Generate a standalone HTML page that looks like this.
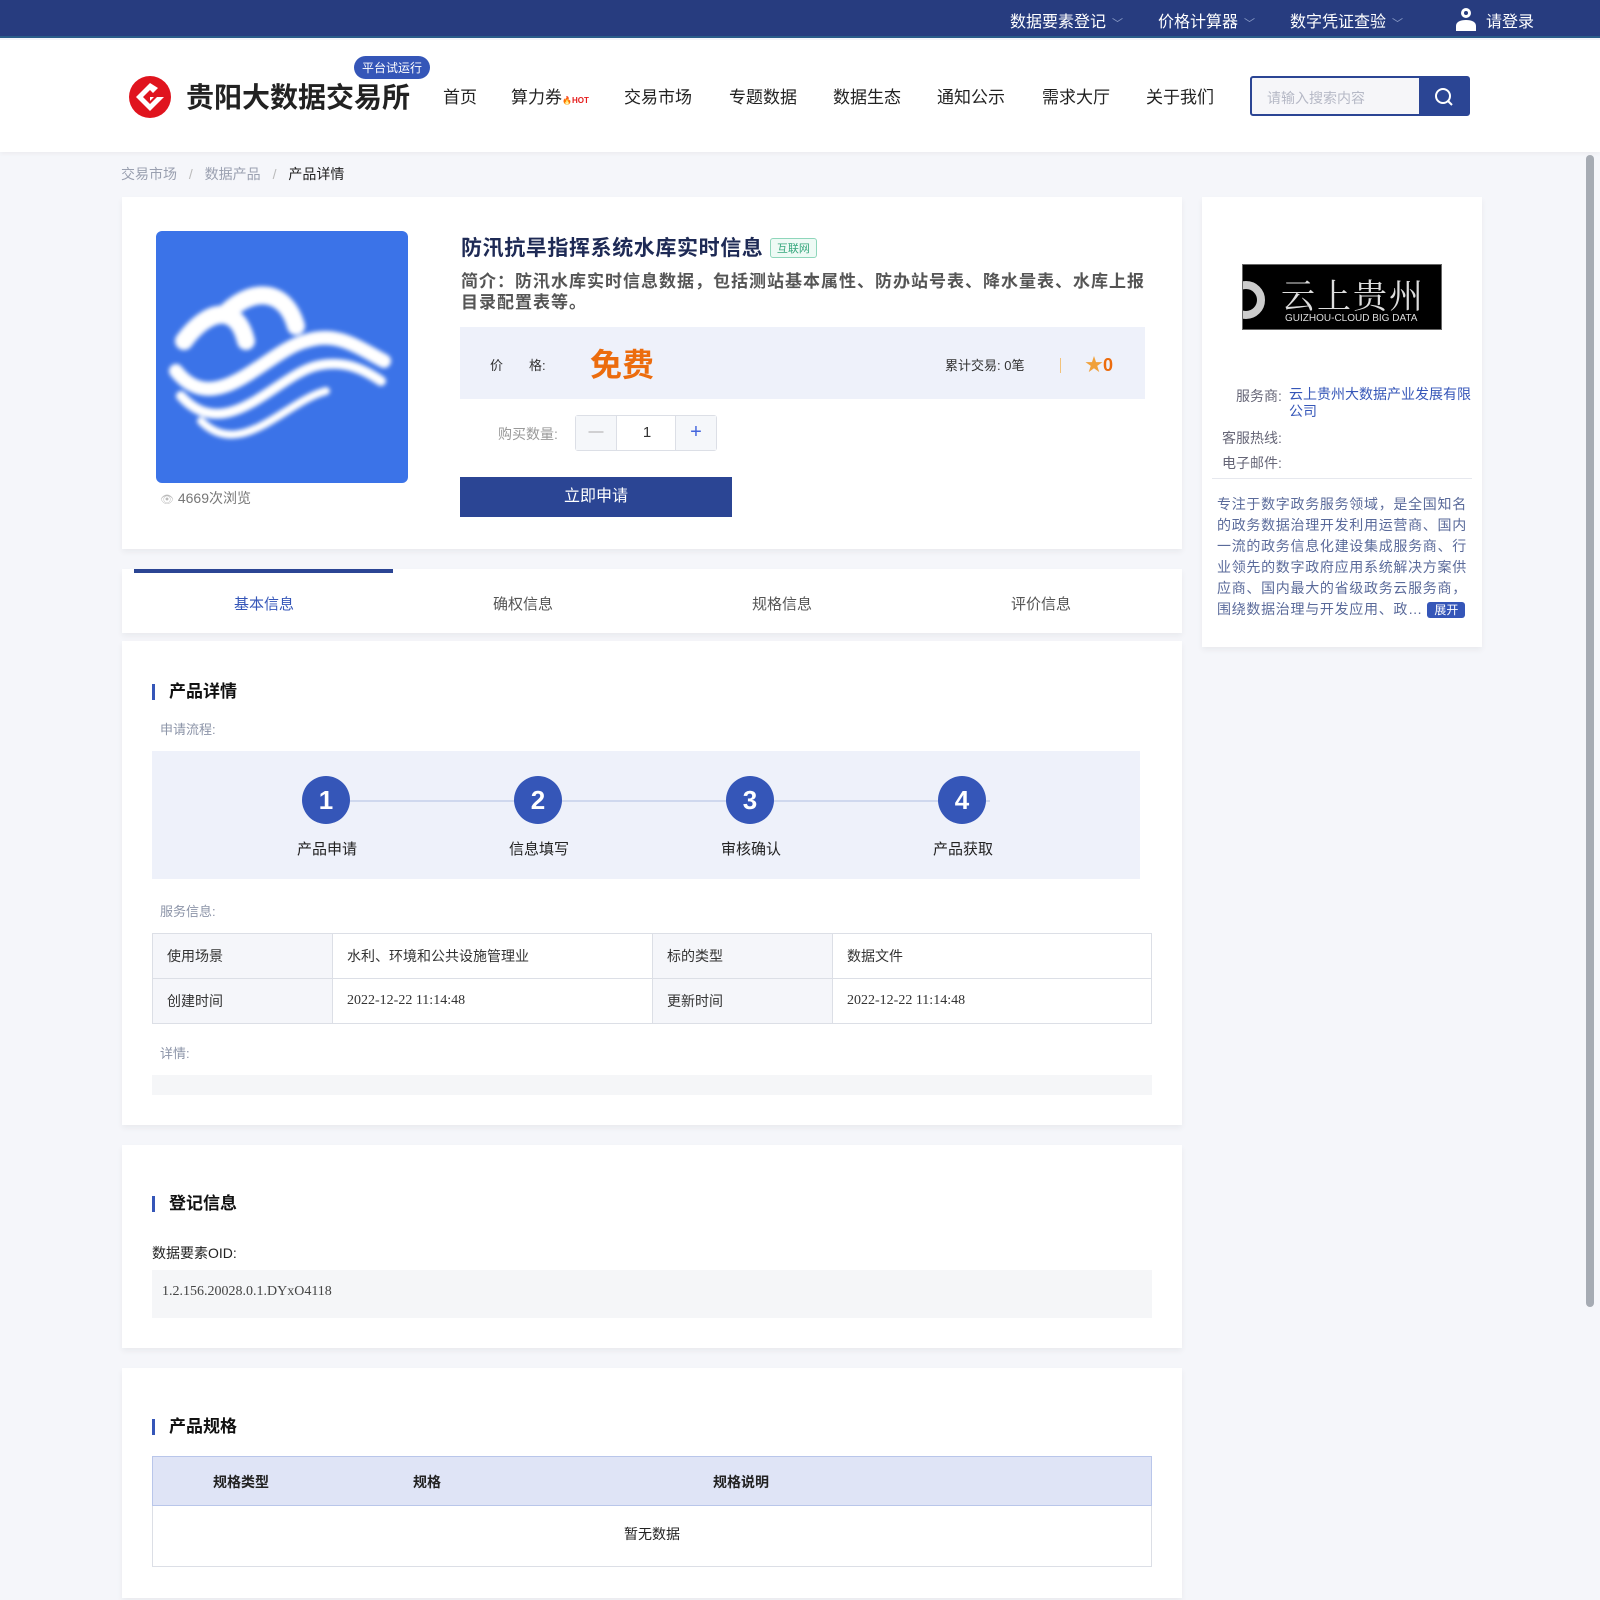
<!DOCTYPE html>
<html><head><meta charset="utf-8">
<style>
*{margin:0;padding:0;box-sizing:border-box}
body{width:1600px;height:1600px;background:#f5f6fa;font-family:"Liberation Sans","Noto Sans CJK SC",sans-serif;position:relative;overflow:hidden;color:#333}
.a{position:absolute}
.top{left:0;top:0;width:1600px;height:38px;background:#273c7f;border-bottom:2px solid #2a5d8a}
.top span{position:absolute;top:8px;color:#fff;font-size:16px}
.top i{font-style:normal;color:#8a9bc6;font-size:11px;margin-left:6px}
.hdr{left:0;top:40px;width:1600px;height:112px;background:#fff;box-shadow:0 2px 4px rgba(0,0,0,.04)}
.nav{position:absolute;top:83px;font-size:17px;color:#222}
.card{background:#fff;box-shadow:0 3px 6px rgba(0,0,0,.05)}
.sec{font-size:17px;font-weight:bold;color:#111;padding-left:14px;border-left:3px solid #3556b8;line-height:16px}
.lbl{font-size:13px;color:#8c94a8}
table{border-collapse:collapse}
td{border:1px solid #dcdfe6;font-size:14px;height:45px;padding-left:14px;color:#333}
.step{position:absolute;top:776px;width:48px;height:48px;border-radius:50%;background:#3556b8;color:#fff;font-size:26px;font-weight:bold;text-align:center;line-height:48px}
.stl{position:absolute;top:838px;font-size:15px;color:#222;width:80px;text-align:center}
</style></head><body>
<div class="a top">
<span style="left:1010px">数据要素登记<i>﹀</i></span>
<span style="left:1158px">价格计算器<i>﹀</i></span>
<span style="left:1290px">数字凭证查验<i>﹀</i></span>
<svg class="a" style="left:1454px;top:6px" width="24" height="26" viewBox="0 0 24 26"><circle cx="12" cy="7" r="5" fill="#fff"/><path d="M2 25v-5c0-4 4-6 10-6s10 2 10 6v5z" fill="#fff"/><circle cx="12" cy="7" r="2" fill="#273c7f"/></svg>
<span style="left:1486px">请登录</span>
</div>
<div class="a hdr">
<svg class="a" style="left:129px;top:36px" width="42" height="42" viewBox="0 0 42 42"><circle cx="21" cy="21" r="21" fill="#e0141e"/><path d="M21 7 L7 21 L21 35 L35 21 L28 21 L21 28 L14 21 L21 14 L24 17 L29 12 Z" fill="#fff"/><path d="M21 21 L25 21 L21 25 Z" fill="#fff"/></svg>
<div class="a" style="left:186px;top:36px;font-size:28px;font-weight:bold;color:#222">贵阳大数据交易所</div>
<div class="a" style="left:354px;top:16px;background:#3556b8;color:#fff;font-size:12px;padding:3px 8px;border-radius:12px">平台试运行</div>
</div>
<div class="nav" style="left:443px">首页</div>
<div class="nav" style="left:511px">算力券<span style="color:#e51c1c;font-size:8px;font-weight:bold">🔥HOT</span></div>
<div class="nav" style="left:624px">交易市场</div>
<div class="nav" style="left:729px">专题数据</div>
<div class="nav" style="left:833px">数据生态</div>
<div class="nav" style="left:937px">通知公示</div>
<div class="nav" style="left:1042px">需求大厅</div>
<div class="nav" style="left:1146px">关于我们</div>
<div class="a" style="left:1250px;top:76px;width:220px;height:40px;border:2px solid #2b4594;border-radius:3px;background:#f6f6f9"><span style="position:absolute;left:15px;top:10px;font-size:14px;color:#b6b9c6">请输入搜索内容</span><div style="position:absolute;right:0;top:0;width:49px;height:36px;background:#2b4594"><svg style="margin:8px 0 0 14px" width="22" height="22" viewBox="0 0 22 22"><circle cx="10" cy="10" r="7" stroke="#fff" stroke-width="2" fill="none"/><path d="M15 15l4 4" stroke="#fff" stroke-width="2"/></svg></div></div>
<div class="a" style="left:1586px;top:155px;width:8px;height:1152px;background:#a6abb3;border-radius:4px"></div>

<div class="a" style="left:121px;top:164px;font-size:14px;color:#9aa0b0">交易市场 <span style="margin:0 8px;color:#bbb">/</span> 数据产品 <span style="margin:0 8px;color:#bbb">/</span> <span style="color:#222">产品详情</span></div>

<div class="a card" style="left:122px;top:197px;width:1060px;height:352px"></div>
<svg class="a" style="left:156px;top:231px" width="252" height="252" viewBox="0 0 252 252"><defs><filter id="b"><feGaussianBlur stdDeviation="2"/></filter></defs><rect width="252" height="252" rx="6" fill="#3b73e8"/><g filter="url(#b)" fill="none" stroke="#fff" stroke-linecap="round"><path d="M28 110 C50 80 80 70 90 110" stroke-width="18"/><path d="M72 80 C100 55 130 60 140 95" stroke-width="18"/><path d="M20 140 C60 190 110 120 150 110 C180 100 200 115 228 130" stroke-width="14"/><path d="M25 165 C70 215 120 145 160 135 C190 128 210 140 225 150" stroke-width="10"/><path d="M45 190 C85 230 130 170 170 160" stroke-width="8"/></g></svg>
<div class="a" style="left:160px;top:488px;font-size:14px;color:#777"><span style="color:#bbb;font-size:11px">👁</span> 4669次浏览</div>
<div class="a" style="left:461px;top:232px;font-size:21px;letter-spacing:0.6px;font-weight:bold;color:#1e2a55">防汛抗旱指挥系统水库实时信息 <span style="display:inline-block;vertical-align:3px;font-size:11px;letter-spacing:0;font-weight:normal;color:#36a77d;border:1px solid #8fd6bb;background:#eefaf5;padding:1px 6px;border-radius:3px">互联网</span></div>
<div class="a" style="left:461px;top:271px;width:690px;font-size:17px;letter-spacing:1px;color:#555;font-weight:bold;line-height:21px">简介：防汛水库实时信息数据，包括测站基本属性、防办站号表、降水量表、水库上报目录配置表等。</div>
<div class="a" style="left:460px;top:327px;width:685px;height:72px;background:#eef1fa"></div>
<div class="a" style="left:490px;top:355px;font-size:13px;color:#333">价　　格:</div>
<div class="a" style="left:590px;top:340px;font-size:32px;font-weight:bold;color:#ec6c0d">免费</div>
<div class="a" style="left:945px;top:355px;font-size:13px;color:#333">累计交易: 0笔</div>
<div class="a" style="left:1060px;top:358px;width:1px;height:15px;background:#f2c27a"></div>
<div class="a" style="left:1085px;top:351px;font-size:18px;color:#f0a13a">★<span style="color:#ec6c0d;font-weight:bold;font-size:18px">0</span></div>
<div class="a" style="left:498px;top:424px;font-size:14px;color:#999">购买数量:</div>
<div class="a" style="left:575px;top:415px;width:142px;height:36px;border:1px solid #dcdfe6;border-radius:3px;background:#fff;font-size:15px">
<div style="position:absolute;left:0;top:0;width:41px;height:34px;background:#f5f7fa;border-right:1px solid #dcdfe6;text-align:center;line-height:32px;color:#aaa">—</div>
<div style="position:absolute;left:41px;top:0;width:60px;text-align:center;line-height:34px">1</div>
<div style="position:absolute;right:0;top:0;width:41px;height:34px;background:#f5f7fa;border-left:1px solid #dcdfe6;text-align:center;line-height:32px;color:#4466dd;font-size:20px">+</div></div>
<div class="a" style="left:460px;top:477px;width:272px;height:40px;background:#2b4594;color:#fff;font-size:16px;text-align:center;line-height:40px">立即申请</div>

<div class="a card" style="left:122px;top:569px;width:1060px;height:64px"></div>
<div class="a" style="left:134px;top:569px;width:259px;height:4px;background:#2b4594"></div>
<div class="a" style="left:234px;top:593px;font-size:15px;color:#3556b8">基本信息</div>
<div class="a" style="left:493px;top:593px;font-size:15px;color:#555">确权信息</div>
<div class="a" style="left:752px;top:593px;font-size:15px;color:#555">规格信息</div>
<div class="a" style="left:1011px;top:593px;font-size:15px;color:#555">评价信息</div>

<div class="a card" style="left:122px;top:641px;width:1060px;height:484px"></div>
<div class="a sec" style="left:152px;top:684px">产品详情</div>
<div class="a lbl" style="left:160px;top:719px">申请流程:</div>
<div class="a" style="left:152px;top:751px;width:988px;height:128px;background:#eef1fa"></div>
<div class="a" style="left:350px;top:800px;width:640px;height:2px;background:#cfd8ee"></div>
<div class="step" style="left:302px">1</div><div class="stl" style="left:287px">产品申请</div>
<div class="step" style="left:514px">2</div><div class="stl" style="left:499px">信息填写</div>
<div class="step" style="left:726px">3</div><div class="stl" style="left:711px">审核确认</div>
<div class="step" style="left:938px">4</div><div class="stl" style="left:923px">产品获取</div>
<div class="a lbl" style="left:160px;top:901px">服务信息:</div>
<table class="a" style="left:152px;top:933px;width:1000px">
<tr><td style="width:180px;background:#f5f6fa">使用场景</td><td style="width:320px">水利、环境和公共设施管理业</td><td style="width:180px;background:#f5f6fa">标的类型</td><td>数据文件</td></tr>
<tr><td style="background:#f5f6fa">创建时间</td><td style="font-family:'Liberation Serif',serif">2022-12-22 11:14:48</td><td style="background:#f5f6fa">更新时间</td><td style="font-family:'Liberation Serif',serif">2022-12-22 11:14:48</td></tr>
</table>
<div class="a lbl" style="left:160px;top:1043px">详情:</div>
<div class="a" style="left:152px;top:1075px;width:1000px;height:20px;background:#f5f6f8"></div>

<div class="a card" style="left:122px;top:1145px;width:1060px;height:203px"></div>
<div class="a sec" style="left:152px;top:1196px">登记信息</div>
<div class="a" style="left:152px;top:1243px;font-size:14px;color:#222">数据要素OID:</div>
<div class="a" style="left:152px;top:1270px;width:1000px;height:48px;background:#f5f6f8;font-family:'Liberation Serif',serif;font-size:14px;color:#444;padding:14px 10px">1.2.156.20028.0.1.DYxO4118</div>

<div class="a card" style="left:122px;top:1368px;width:1060px;height:230px"></div>
<div class="a sec" style="left:152px;top:1419px">产品规格</div>
<div class="a" style="left:152px;top:1456px;width:1000px;height:50px;background:#dfe4f6;border:1px solid #b9c6ea;font-size:14px;font-weight:bold;color:#222">
<span style="position:absolute;left:60px;top:15px">规格类型</span><span style="position:absolute;left:260px;top:15px">规格</span><span style="position:absolute;left:560px;top:15px">规格说明</span></div>
<div class="a" style="left:152px;top:1506px;width:1000px;height:61px;border:1px solid #dcdfe6;border-top:none;text-align:center;line-height:56px;font-size:14px;color:#222">暂无数据</div>

<div class="a card" style="left:1202px;top:197px;width:280px;height:450px"></div>
<div class="a" style="left:1242px;top:264px;width:200px;height:66px;background:#000;overflow:hidden;border:1px solid #666">
<div style="position:absolute;left:-16px;top:16px;width:38px;height:38px;border-radius:50%;border:8px solid #ccc"></div>
<div style="position:absolute;left:38px;top:4px;color:#ddd;font-size:34px;font-family:'Noto Serif CJK SC',serif;letter-spacing:2px">云上贵州</div>
<div style="position:absolute;left:42px;top:48px;color:#ddd;font-size:10px">GUIZHOU-CLOUD BIG DATA</div></div>
<div class="a" style="left:1236px;top:386px;font-size:14px;color:#667">服务商:</div>
<div class="a" style="left:1289px;top:386px;width:185px;font-size:14px;color:#3556b8;line-height:17px">云上贵州大数据产业发展有限公司</div>
<div class="a" style="left:1222px;top:428px;font-size:14px;color:#667">客服热线:</div>
<div class="a" style="left:1222px;top:453px;font-size:14px;color:#667">电子邮件:</div>
<div class="a" style="left:1212px;top:478px;width:260px;height:1px;background:#e6e8ee"></div>
<div class="a" style="left:1217px;top:494px;width:258px;font-size:14px;letter-spacing:0.7px;color:#5a6a9a;line-height:21px">专注于数字政务服务领域，是全国知名的政务数据治理开发利用运营商、国内一流的政务信息化建设集成服务商、行业领先的数字政府应用系统解决方案供应商、国内最大的省级政务云服务商，围绕数据治理与开发应用、政… <span style="background:#3556b8;color:#fff;font-size:12px;letter-spacing:0;padding:1px 7px;border-radius:3px">展开</span></div>
</body></html>
